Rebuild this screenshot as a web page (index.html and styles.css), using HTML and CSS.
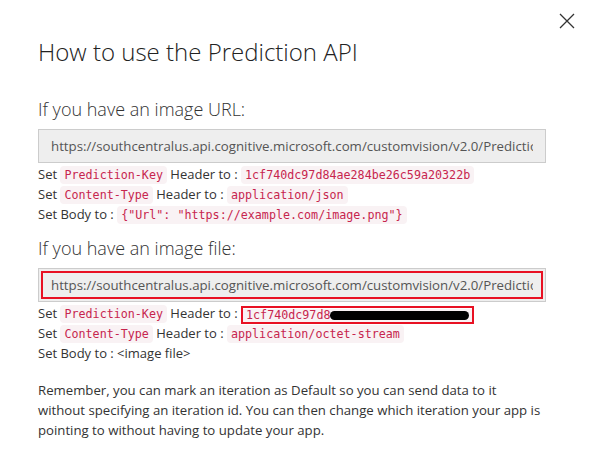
FILE: index.html
```html
<!DOCTYPE html>
<html>
<head>
<meta charset="utf-8">
<link rel="stylesheet" href="styles.css">
</head>
<body>
<div class="dialog">
  <button class="close" aria-label="Close">
    <svg width="16" height="16" viewBox="0 0 16 16"><path d="M1 1L15 15M15 1L1 15" stroke="#333" stroke-width="1.3" fill="none"/></svg>
  </button>
  <h1 class="title">How to use the Prediction API</h1>

  <h2 class="subtitle">If you have an image URL:</h2>
  <div class="url"><div class="url-inner"><span class="url-text">https://southcentralus.api.cognitive.microsoft.com/customvision/v2.0/Prediction/1a2b3c4d/url</span></div></div>
  <div class="lines">
    <div class="line">Set <code>Prediction-Key</code> Header to : <code>1cf740dc97d84ae284be26c59a20322b</code></div>
    <div class="line">Set <code>Content-Type</code> Header to : <code>application/json</code></div>
    <div class="line">Set Body to : <code>{"Url": "https://example.com/image.png"}</code></div>
  </div>

  <h2 class="subtitle second">If you have an image file:</h2>
  <div class="url"><div class="url-inner marked"><span class="url-text">https://southcentralus.api.cognitive.microsoft.com/customvision/v2.0/Prediction/1a2b3c4d/image</span></div></div>
  <div class="lines">
    <div class="line">Set <code>Prediction-Key</code> Header to : <span class="keybox"><code class="key">1cf740dc97d8<span class="redact"></span></code></span></div>
    <div class="line">Set <code>Content-Type</code> Header to : <code>application/octet-stream</code></div>
    <div class="line">Set Body to : &lt;image file&gt;</div>
  </div>

  <p class="note">Remember, you can mark an iteration as Default so you can send data to it without specifying an iteration id. You can then change which iteration your app is pointing to without having to update your app.</p>
</div>
</body>
</html>
```
FILE: styles.css
```css
html, body {
  margin: 0;
  padding: 0;
  background: #fff;
}
body {
  font-family: "Open Sans", "Noto Sans", sans-serif;
  color: #333;
  width: 589px;
  height: 469px;
  overflow: hidden;
}
.dialog {
  position: relative;
  padding: 35px 43px 0 38px;
}
.close {
  position: absolute;
  top: 13px;
  right: 14px;
  width: 16px;
  height: 16px;
  padding: 0;
  border: 0;
  background: none;
}
.close svg { display: block; }
.title {
  margin: 0;
  font-size: 24px;
  font-weight: 300;
  line-height: 34px;
  color: #222;
}
.subtitle {
  margin: 28px 0 0;
  font-size: 18px;
  font-weight: 300;
  line-height: 24px;
  color: #333;
}
.subtitle.second { margin-top: 12px; }
.url {
  margin-top: 8px;
  border: 1px solid #ccc;
  background: #eee;
  padding: 2px;
}
.url-inner {
  border: 2px solid transparent;
  height: 24px;
  padding: 0 8px;
  display: flex;
  align-items: center;
}
.url-inner.marked { border-color: #e81123; }
.url-text {
  display: block;
  overflow: hidden;
  white-space: nowrap;
  font-size: 13.25px;
  color: #555;
}
.lines {
  margin-top: 1px;
}
.line {
  font-size: 13px;
  line-height: 20px;
  height: 20px;
  white-space: nowrap;
}
code {
  font-family: "DejaVu Sans Mono", "Liberation Mono", monospace;
  font-size: 11.7px;
  color: #c7254e;
  background: #f9f2f4;
  border-radius: 4px;
  padding: 2px 4px;
}
.keybox {
  display: inline-block;
  border: 2px solid #e81123;
  line-height: 13px;
  vertical-align: middle;
  padding: 0;
}
.key {
  display: inline-flex;
  align-items: center;
  padding: 0 3px;
  border-radius: 0;
  width: 229px;
  box-sizing: border-box;
}
.redact {
  display: inline-block;
  width: 141px;
  height: 9px;
  background: #000;
  border-radius: 5px;
}
.note {
  margin: 17px 0 0;
  width: 504px;
  font-size: 13.2px;
  line-height: 20px;
  color: #333;
}
```
